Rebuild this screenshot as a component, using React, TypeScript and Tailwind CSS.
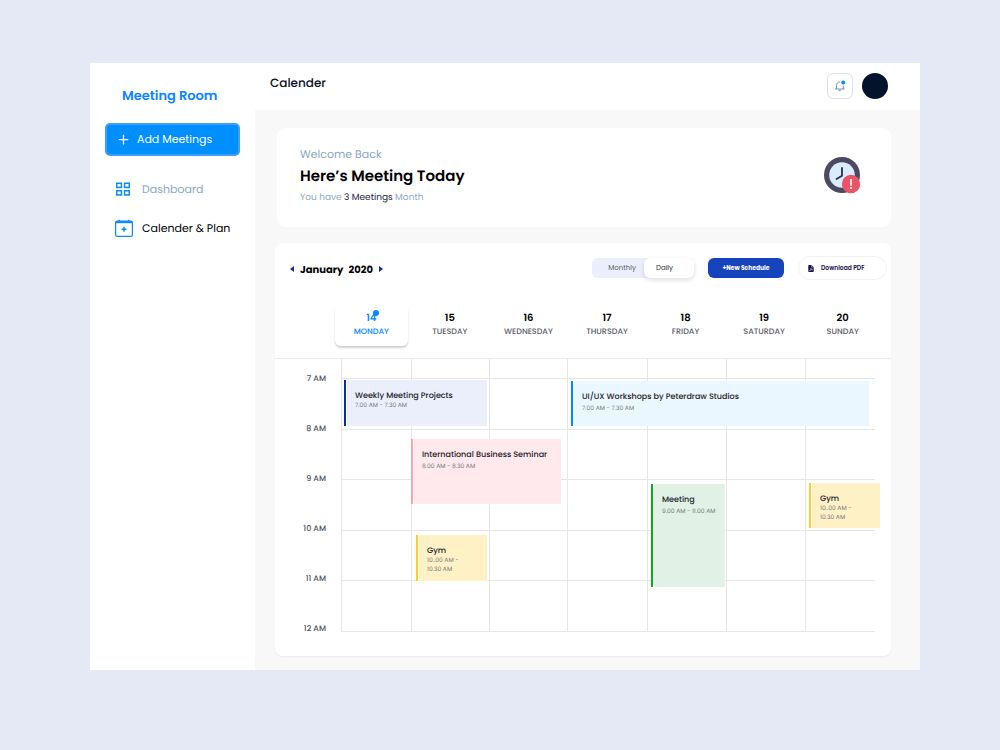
import clsx from "clsx";
import { Plus } from "lucide-react";

type Day = { date: number; name: string };

type CalendarEvent = {
  title: string;
  time: string;
  left: number;
  top: number;
  width: number;
  height: number;
  bar: string;
  fill: string;
  spacing: string;
};

const days: Day[] = [
  { date: 14, name: "MONDAY" },
  { date: 15, name: "TUESDAY" },
  { date: 16, name: "WEDNESDAY" },
  { date: 17, name: "THURSDAY" },
  { date: 18, name: "FRIDAY" },
  { date: 19, name: "SATURDAY" },
  { date: 20, name: "SUNDAY" },
];

const hours = ["7 AM", "8 AM", "9 AM", "10 AM", "11 AM", "12 AM"];

// left and width are in units of the grid's 534 unit width
const GRID_WIDTH = 534;

const events: CalendarEvent[] = [
  {
    title: "Weekly Meeting Projects",
    time: "7.00 AM - 7.30 AM",
    left: 3,
    top: 21,
    width: 143,
    height: 46,
    bar: "border-[#0c2ea3]",
    fill: "bg-[#ebeffb]",
    spacing: "gap-0",
  },
  {
    title: "UI/UX Workshops by Peterdraw Studios",
    time: "7.00 AM - 7.30 AM",
    left: 230,
    top: 22,
    width: 298,
    height: 45,
    bar: "border-[#008cff]",
    fill: "bg-[#ebf7ff]",
    spacing: "gap-0.5",
  },
  {
    title: "International Business Seminar",
    time: "8.00 AM - 8.30 AM",
    left: 70,
    top: 80,
    width: 150,
    height: 65,
    bar: "border-[#ff9fb2]",
    fill: "bg-[#ffe9ed]",
    spacing: "gap-0.5",
  },
  {
    title: "Meeting",
    time: "9.00 AM - 11.00 AM",
    left: 310,
    top: 125,
    width: 74,
    height: 103,
    bar: "border-[#06ae1d]",
    fill: "bg-[#e1f1e6]",
    spacing: "gap-0.5",
  },
  {
    title: "Gym",
    time: "10..00 AM - 10.30 AM",
    left: 468,
    top: 124,
    width: 71,
    height: 45,
    bar: "border-[#fcce2b]",
    fill: "bg-[#fff1c6]",
    spacing: "gap-0",
  },
  {
    title: "Gym",
    time: "10..00 AM - 10.30 AM",
    left: 75,
    top: 176,
    width: 71,
    height: 46,
    bar: "border-[#fcce2b]",
    fill: "bg-[#fff1c6]",
    spacing: "gap-0",
  },
];

function DashboardIcon() {
  return (
    <svg className="h-[14px] w-[14px]" viewBox="0 0 14 14" fill="none" stroke="#0a8bff" strokeWidth="1.5">
      <rect x="0.75" y="1.25" width="4.7" height="4.2" />
      <rect x="8.55" y="1.25" width="4.7" height="4.2" />
      <rect x="0.75" y="8.75" width="4.7" height="4.2" />
      <rect x="8.55" y="8.75" width="4.7" height="4.2" />
    </svg>
  );
}

function PlanIcon() {
  return (
    <svg className="h-[18px] w-[18px]" viewBox="0 0 18 18" fill="none" stroke="#0a8bff">
      <rect x="0.6" y="2.1" width="16.8" height="15.2" rx="1.6" strokeWidth="1.2" />
      <path d="M.8 3.1h16.4" strokeWidth="2.2" />
      <path d="M4.3.8v2M13.7.8v2" strokeWidth="1.6" />
      <path d="M9 7.8v5M6.5 10.3h5" strokeWidth="1.5" />
    </svg>
  );
}

function BellIcon() {
  return (
    <svg className="h-3 w-3" viewBox="0 0 12 12" fill="none" stroke="#6f93b5" strokeWidth="1">
      <path d="M1 9h9.5M2.5 9V5.5C2.5 3.4 3.8 2 6 2M9.3 5.5V9" />
      <path d="M4.6 10.3c.3 1 1.9 1 2.2 0z" fill="#6f93b5" strokeWidth="0.4" />
      <circle cx="9.2" cy="2.4" r="2" fill="#0a8bff" stroke="none" />
    </svg>
  );
}

function ClockIcon() {
  return (
    <svg className="h-[37px] w-[37px]" viewBox="0 0 37 37" fill="none">
      <circle cx="18" cy="18" r="18" fill="#4b4964" />
      <circle cx="18" cy="18" r="12.8" fill="#d9ecfd" />
      <path d="M18 11v7.800l-5.500 3.200" stroke="#2f2e45" strokeWidth="1.8" strokeLinecap="round" strokeLinejoin="round" />
      <circle cx="27" cy="27" r="9.2" fill="#ed5266" />
      <path d="M27 22v6.500" stroke="#fde7ea" strokeWidth="2" />
      <path d="M27 30v2" stroke="#fde7ea" strokeWidth="2" />
    </svg>
  );
}

function PdfIcon() {
  return (
    <svg className="h-[7px] w-[6px]" viewBox="0 0 10 13">
      <path d="M1.2 0H6l4 4v7.8c0 .7-.5 1.2-1.2 1.2H1.2C.5 13 0 12.5 0 11.8V1.2C0 .5.5 0 1.2 0z" fill="#1b0f4d" />
      <path d="M6 0v4h4" fill="none" stroke="#fff" strokeWidth="0.8" />
      <path d="M2.2 10.5c2-1 3-3 2.7-4.8.4 2 1.4 3 3 3.1-2 0-4 .5-5.7 1.7z" fill="none" stroke="#fff" strokeWidth="0.8" />
    </svg>
  );
}

function Sidebar() {
  return (
    <aside className="w-[165px] shrink-0 bg-white px-[15px] pt-6">
      <h1 className="pl-[17px] text-[13px] leading-[18px] font-semibold text-[#0a85ff]">Meeting Room</h1>
      <button className="mt-[18px] flex h-[33px] w-full items-center gap-[6px] rounded-[5px] border-2 border-[#3d9ff5] bg-[#008fff] px-[9px] text-[11px] text-white">
        <Plus className="h-[15px] w-[15px]" strokeWidth={2} />
        Add Meetings
      </button>
      <nav className="mt-[23px] flex flex-col gap-[19px] pl-[10px] text-[11px]">
        <a href="#dashboard" className="flex h-5 items-center text-[#8ba8c3]">
          <span className="w-[27px] pl-px"><DashboardIcon /></span>
          Dashboard
        </a>
        <a href="#plan" className="flex h-5 items-center text-black">
          <span className="w-[27px]"><PlanIcon /></span>
          Calender & Plan
        </a>
      </nav>
    </aside>
  );
}

function Header() {
  return (
    <header className="flex h-[47px] items-center justify-between bg-white pr-8 pl-[15px]">
      <h2 className="pb-[6px] text-[12px] font-medium text-[#0b1020]">Calender</h2>
      <div className="flex items-center gap-[9px] pb-px">
        <button aria-label="Notifications" className="flex h-[26px] w-[26px] items-center justify-center rounded-md border border-[#d9e2ec]">
          <BellIcon />
        </button>
        <button aria-label="Profile" className="h-[26px] w-[26px] rounded-full bg-[#03132b]" />
      </div>
    </header>
  );
}

function Welcome() {
  return (
    <section className="ml-0.5 flex items-center justify-between rounded-[8px] bg-white pt-4 pr-[30px] pb-[21px] pl-[23px]">
      <div className="pt-0.5">
        <p className="text-[11px] leading-4 text-[#8ba8c3]">Welcome Back</p>
        <h3 className="pt-[5px] text-[15px] leading-5 font-semibold text-black">Here’s Meeting Today</h3>
        <p className="pt-1 text-[9px] leading-[15px] text-[#8ba8c3]">
          You have <span className="text-[#14213d]">3 Meetings</span> Month
        </p>
      </div>
      <ClockIcon />
    </section>
  );
}

function Toolbar() {
  return (
    <div className="flex h-[26px] items-center justify-between pr-1 pl-[15px]">
      <div className="flex items-center pt-0.5 text-[10px] font-bold text-black">
        <button aria-label="Previous month" className="mr-[6px] border-y-3 border-r-4 border-y-transparent border-r-[#0c2ea3]" />
        <span>January</span>
        <span className="ml-[5px]">2020</span>
        <button aria-label="Next month" className="ml-[6px] border-y-3 border-l-4 border-y-transparent border-l-[#0c2ea3]" />
      </div>
      <div className="flex items-center">
        <div className="flex h-5 rounded-[6px] bg-[#ebeffb] text-[7px] text-[#5b606b]">
          <button className="w-[52px] pl-2">Monthly</button>
          <button className="w-[50px] rounded-[6px] bg-white pr-[9px] text-[#33363d] shadow-[0_2px_5px_rgba(0,0,0,0.13)]">Daily</button>
        </div>
        <button className="ml-[14px] h-5 w-[76px] rounded-[6px] bg-[#1544bd] text-[6px] font-bold text-white">+New Schedule</button>
        <button className="ml-[14px] flex h-6 w-[89px] items-center gap-[7px] rounded-full border border-[#f3f3f5] pl-[9px] text-[6px] font-semibold text-[#1b0f4d]">
          <PdfIcon />
          Download PDF
        </button>
      </div>
    </div>
  );
}

function DayHeader() {
  return (
    <div className="mt-[23px] grid grid-cols-7 border-b border-[#ebebeb] pr-[9px] pb-3 pl-[57px]">
      {days.map((day, index) => (
        <div
          key={day.name}
          className={clsx(
            "mx-[3px] h-[42px] rounded-[6px] pt-[7px] text-center",
            index === 0 ? "text-[#008cff] shadow-[0_2px_2px_rgba(0,0,0,0.18)]" : "text-[#5b6069]",
          )}
        >
          <p className={clsx("text-[10px] leading-[14px] font-semibold", index > 0 && "text-black")}>
            <span className="relative">
              {day.date}
              {index === 0 && <span className="absolute top-0 -right-[3px] h-[6px] w-[6px] rounded-full bg-[#008cff]" />}
            </span>
          </p>
          <p className="text-[8px] leading-[14px] font-medium">{day.name}</p>
        </div>
      ))}
    </div>
  );
}

function EventCard({ event }: { event: CalendarEvent }) {
  return (
    <article
      className={clsx("absolute flex flex-col border-l-2 bg-white pl-px", event.bar)}
      style={{
        left: `${(event.left / GRID_WIDTH) * 100}%`,
        width: `${(event.width / GRID_WIDTH) * 100}%`,
        top: event.top,
        height: event.height,
      }}
    >
      <div className={clsx("flex flex-1 flex-col pt-[10px] pl-2", event.fill, event.spacing)}>
        <h4 className="text-[8px] leading-3 font-medium whitespace-nowrap text-[#1d222b]">{event.title}</h4>
        <p className="pr-4 text-[6px] leading-[9px] text-[#747981]">
          {event.title === "Gym" ? event.time : <span className="whitespace-nowrap">{event.time}</span>}
        </p>
      </div>
    </article>
  );
}

function Schedule() {
  return (
    <div className="flex">
      <div className="flex w-[66px] shrink-0 flex-col gap-[38px] pt-[14px] pr-[15px] text-right text-[8px] leading-[12px] font-medium text-[#4c515a]">
        {hours.map((hour) => (
          <span key={hour}>{hour}</span>
        ))}
      </div>
      <div className="relative mr-4 h-[273px] flex-1">
        <div className="grid h-full grid-cols-[70fr_78fr_78fr_80fr_79fr_79fr_70fr] grid-rows-[20px_repeat(5,1fr)]">
          {Array.from({ length: 42 }, (_, i) => (
            <div key={i} className="border-b border-l border-[#e6e6e6]" />
          ))}
        </div>
        {events.map((event) => (
          <EventCard key={`${event.title}-${event.left}`} event={event} />
        ))}
      </div>
    </div>
  );
}

export default function App() {
  return (
    <div className="min-h-screen bg-[#e5e9f5] pt-[63px] pr-20 pb-20 pl-[90px] font-['Poppins','Inter',sans-serif] [text-rendering:geometricPrecision]">
      <div className="flex">
        <Sidebar />
        <main className="min-w-0 flex-1 bg-[#f8f8f8]">
          <Header />
          <div className="pt-[18px] pr-[29px] pb-[14px] pl-5">
            <Welcome />
            <section className="mt-4 rounded-[8px] bg-white pt-3 pb-[21px] shadow-[0_1px_2px_rgba(0,0,0,0.06)]">
              <Toolbar />
              <DayHeader />
              <Schedule />
            </section>
          </div>
        </main>
      </div>
    </div>
  );
}
